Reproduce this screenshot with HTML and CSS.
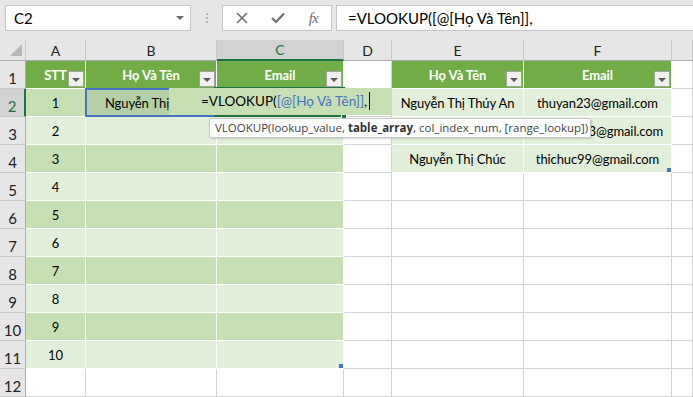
FILE: index.html
```html
<!DOCTYPE html>
<html lang="vi">

<head>
    <meta charset="UTF-8" />
    <title>Bảng tính</title>
    <link rel="stylesheet" href="styles.css">
</head>

<body>
    <div class="toolbar">
        <div class="namebox">
            <span>C2</span>
            <span class="caret"></span>
        </div>
        <div class="grip"><i></i><i></i><i></i></div>
        <div class="fx-buttons">
            <span class="fx-btn">
                <svg width="12" height="12" viewBox="0 0 12 12"><path d="M1 1 L11 11 M11 1 L1 11" stroke="#6e6e6e" stroke-width="1.6" fill="none" /></svg>
            </span>
            <span class="fx-btn">
                <svg width="14" height="12" viewBox="0 0 14 12"><path d="M1 6 L5 10 L13 1.5" stroke="#6e6e6e" stroke-width="2.2" fill="none" /></svg>
            </span>
            <span class="fx-btn fx-label">fx</span>
        </div>
        <div class="formula">=VLOOKUP([@[Họ Và Tên]],</div>
    </div>

    <div class="sheet">
        <!-- tiêu đề cột -->
        <div class="c corner"><span class="tri"></span></div>
        <div class="c ch">A</div>
        <div class="c ch">B</div>
        <div class="c ch sel">C</div>
        <div class="c ch">D</div>
        <div class="c ch">E</div>
        <div class="c ch">F</div>
        <div class="c ch"></div>

        <div class="c rh">1</div>
        <div class="c th">STT<span class="filter"></span></div>
        <div class="c th">Họ Và Tên<span class="filter"></span></div>
        <div class="c th">Email<span class="filter"></span></div>
        <div class="c"></div>
        <div class="c th">Họ Và Tên<span class="filter"></span></div>
        <div class="c th">Email<span class="filter"></span></div>
        <div class="c"></div>

        <div class="c rh sel">2</div>
        <div class="c dark">1</div>
        <div class="c dark ref">Nguyễn Thị</div>
        <div class="c dark"></div>
        <div class="c"></div>
        <div class="c light">Nguyễn Thị Thúy An</div>
        <div class="c light">thuyan23@gmail.com</div>
        <div class="c"></div>

        <div class="c rh">3</div>
        <div class="c light">2</div>
        <div class="c light"></div>
        <div class="c light"></div>
        <div class="c"></div>
        <div class="c light">Nguyễn Thị Ngọc</div>
        <div class="c light">thingoc123@gmail.com</div>
        <div class="c"></div>

        <div class="c rh">4</div>
        <div class="c dark">3</div>
        <div class="c dark"></div>
        <div class="c dark"></div>
        <div class="c"></div>
        <div class="c light">Nguyễn Thị Chúc</div>
        <div class="c light end">thichuc99@gmail.com</div>
        <div class="c"></div>

        <div class="c rh">5</div>
        <div class="c light">4</div>
        <div class="c light"></div>
        <div class="c light"></div>
        <div class="c"></div><div class="c"></div><div class="c"></div><div class="c"></div>

        <div class="c rh">6</div>
        <div class="c dark">5</div>
        <div class="c dark"></div>
        <div class="c dark"></div>
        <div class="c"></div><div class="c"></div><div class="c"></div><div class="c"></div>

        <div class="c rh">7</div>
        <div class="c light">6</div>
        <div class="c light"></div>
        <div class="c light"></div>
        <div class="c"></div><div class="c"></div><div class="c"></div><div class="c"></div>

        <div class="c rh">8</div>
        <div class="c dark">7</div>
        <div class="c dark"></div>
        <div class="c dark"></div>
        <div class="c"></div><div class="c"></div><div class="c"></div><div class="c"></div>

        <div class="c rh">9</div>
        <div class="c light">8</div>
        <div class="c light"></div>
        <div class="c light"></div>
        <div class="c"></div><div class="c"></div><div class="c"></div><div class="c"></div>

        <div class="c rh">10</div>
        <div class="c dark">9</div>
        <div class="c dark"></div>
        <div class="c dark"></div>
        <div class="c"></div><div class="c"></div><div class="c"></div><div class="c"></div>

        <div class="c rh">11</div>
        <div class="c light">10</div>
        <div class="c light"></div>
        <div class="c light end"></div>
        <div class="c"></div><div class="c"></div><div class="c"></div><div class="c"></div>

        <div class="c rh">12</div>
        <div class="c"></div><div class="c"></div><div class="c"></div><div class="c"></div>
        <div class="c"></div><div class="c"></div><div class="c"></div>

        <!-- ô đang sửa công thức -->
        <div class="ref-box"></div>
        <div class="active-box"><span class="handle"></span></div>
        <div class="editor">=VLOOKUP(<span class="ref-text">[@[Họ Và Tên]]</span>,<span class="cursor"></span></div>
        <div class="tip">VLOOKUP(lookup_value, <b>table_array</b>, col_index_num, [range_lookup])</div>
    </div>
</body>

</html>
```

FILE: styles.css
```css
* {
    box-sizing: border-box;
}

body {
    margin: 0;
    width: 693px;
    height: 397px;
    overflow: hidden;
    background: #e6e6e6;
    font-family: Lato, "Liberation Sans", sans-serif;
    color: #000;
}

/* Thanh công thức */
.toolbar {
    display: flex;
    align-items: flex-start;
    height: 40px;
    padding-top: 5px;
    padding-left: 5px;
}

.namebox {
    width: 186px;
    height: 26px;
    border: 1px solid #c6c6c6;
    background: #fff;
    display: flex;
    align-items: center;
    justify-content: space-between;
    padding: 0 6px 0 8px;
    font-size: 15px;
}

.caret {
    width: 0;
    height: 0;
    border-left: 4px solid transparent;
    border-right: 4px solid transparent;
    border-top: 4px solid #6e6e6e;
}

.grip {
    display: flex;
    flex-direction: column;
    gap: 2px;
    margin: 8px 14px 0 15px;
}

.grip i {
    width: 2px;
    height: 2px;
    background: #b4b4b4;
}

.fx-buttons {
    display: flex;
    width: 110px;
    height: 26px;
    border: 1px solid #c6c6c6;
    background: #fff;
    padding-left: 1px;
}

.fx-btn {
    width: 36px;
    display: flex;
    align-items: center;
    justify-content: center;
}

.fx-label {
    font-family: "Liberation Serif", serif;
    font-style: italic;
    font-size: 15px;
    color: #6e6e6e;
    letter-spacing: -1px;
}

.formula {
    flex: 1;
    height: 26px;
    margin-left: 4px;
    border: 1px solid #c6c6c6;
    border-right: none;
    background: #fff;
    padding-left: 11px;
    font-size: 15px;
    line-height: 24px;
    white-space: nowrap;
}

/* Lưới bảng tính */
.sheet {
    display: grid;
    grid-template-columns: 26px 60px 131px 127px 48px 132px 148px 21px;
    grid-template-rows: 21px repeat(12, 28px);
    position: relative;
    background: #fff;
}

.c {
    position: relative;
    display: flex;
    align-items: center;
    justify-content: center;
    border-right: 1px solid #d4d4d4;
    border-bottom: 1px solid #d4d4d4;
    font-size: 13px;
    letter-spacing: -0.1px;
    white-space: nowrap;
    overflow: hidden;
}

.corner,
.ch {
    background: #e6e6e6;
    border-right-color: #c8c8c8;
    border-bottom-color: #ababab;
}

.ch {
    font-size: 14px;
    letter-spacing: 0;
    color: #222;
}

.ch.sel {
    background: #d2d2d2;
    color: #217346;
    border-bottom: 2px solid #217346;
}

.tri {
    position: absolute;
    right: 3px;
    bottom: 4px;
    width: 0;
    height: 0;
    border-left: 12px solid transparent;
    border-bottom: 12px solid #b8b8b8;
}

.rh {
    background: #e6e6e6;
    border-right-color: #ababab;
    border-bottom-color: #c8c8c8;
    align-items: flex-end;
    padding-bottom: 1px;
    font-size: 15px;
    letter-spacing: 0;
    color: #222;
}

.rh.sel {
    background: #d2d2d2;
    color: #217346;
    border-right: 2px solid #217346;
}

.th {
    background: #70ad47;
    color: #fff;
    font-weight: 700;
    border-color: #fff;
}

.dark {
    background: #c6e0b4;
    border-color: #fff;
}

.light {
    background: #e2efda;
    border-color: #fff;
}

.ref {
    background: #b5d0a6;
    justify-content: flex-start;
    padding-left: 19px;
}

.filter {
    position: absolute;
    right: 1px;
    bottom: 1px;
    width: 16px;
    height: 16px;
    background: #f0f0f0;
    border: 1px solid #a3a3a3;
}

.filter::after {
    content: '';
    position: absolute;
    left: 3px;
    top: 6px;
    border-left: 4px solid transparent;
    border-right: 4px solid transparent;
    border-top: 4px solid #595959;
}

.end::after {
    content: '';
    position: absolute;
    right: 0;
    bottom: 0;
    width: 4px;
    height: 4px;
    background: #4472c4;
}

/* Ô đang chỉnh sửa */
.ref-box {
    position: absolute;
    left: 85px;
    top: 48px;
    width: 132px;
    height: 29px;
    border: 2px solid #4472c4;
}

.active-box {
    position: absolute;
    left: 214px;
    top: 47px;
    width: 131px;
    height: 30px;
    border: 2px solid #217346;
}

.handle {
    position: absolute;
    right: -4px;
    bottom: -4px;
    width: 6px;
    height: 6px;
    background: #217346;
    border: 1px solid #fff;
}

.editor {
    position: absolute;
    left: 169px;
    top: 48px;
    width: 222px;
    height: 27px;
    background: #c6e0b4;
    padding-left: 32px;
    font-size: 13.5px;
    line-height: 27px;
    white-space: nowrap;
}

.ref-text {
    color: #4472c4;
}

.cursor {
    display: inline-block;
    width: 1px;
    height: 18px;
    margin-left: 2px;
    vertical-align: -4px;
    background: #000;
}

.tip {
    position: absolute;
    left: 209px;
    top: 78px;
    width: 382px;
    height: 20px;
    background: #fff;
    border: 1px solid #c8c8c8;
    border-radius: 2px;
    box-shadow: 1px 1px 2px rgba(0, 0, 0, 0.15);
    padding-left: 5px;
    font-family: "Open Sans", sans-serif;
    font-size: 11.5px;
    line-height: 18px;
    color: #444;
    white-space: nowrap;
}

.tip b {
    font-weight: 700;
    color: #333;
}
```
